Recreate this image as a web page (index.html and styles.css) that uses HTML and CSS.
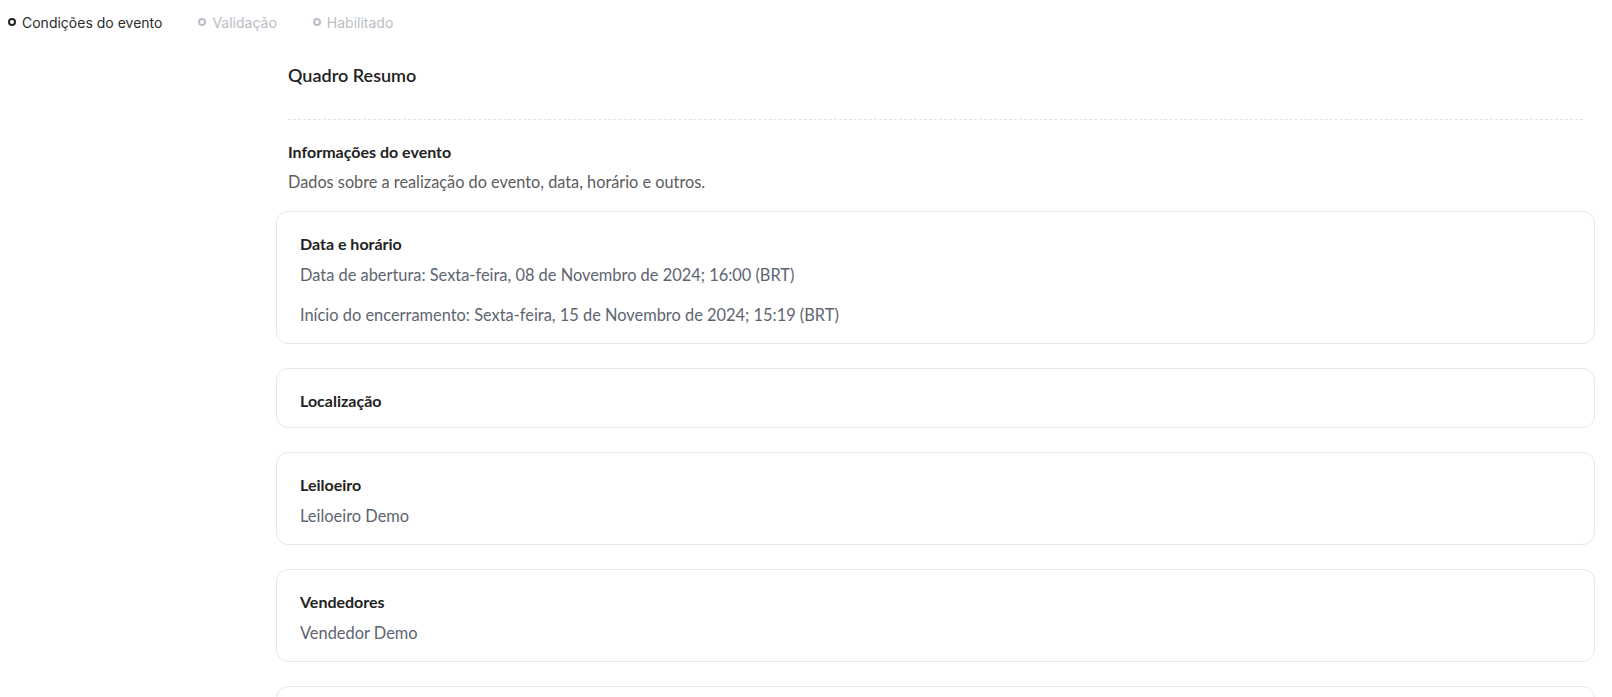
FILE: index.html
```html
<!DOCTYPE html>
<html lang="pt-BR">
<head>
    <meta charset="UTF-8">
    <meta name="viewport" content="width=device-width, initial-scale=1.0">
    <title>Quadro Resumo</title>
    <link rel="stylesheet" href="styles.css">
</head>
<body>
    <div class="steps">
        <div class="step active"><span class="dot"></span>Condições do evento</div>
        <div class="step"><span class="dot"></span>Validação</div>
        <div class="step"><span class="dot"></span>Habilitado</div>
    </div>

    <div class="main">
        <div class="summary-head">
            <h2 class="summary-title">Quadro Resumo</h2>
            <div class="divider"></div>
            <h3 class="section-title">Informações do evento</h3>
            <p class="section-desc">Dados sobre a realização do evento, data, horário e outros.</p>
        </div>

        <div class="card card-dates">
            <h4 class="card-title">Data e horário</h4>
            <p class="card-text">Data de abertura: Sexta-feira, 08 de Novembro de 2024; 16:00 (BRT)</p>
            <p class="card-text">Início do encerramento: Sexta-feira, 15 de Novembro de 2024; 15:19 (BRT)</p>
        </div>
        <div class="card">
            <h4 class="card-title">Localização</h4>
        </div>
        <div class="card">
            <h4 class="card-title">Leiloeiro</h4>
            <p class="card-text">Leiloeiro Demo</p>
        </div>
        <div class="card">
            <h4 class="card-title">Vendedores</h4>
            <p class="card-text">Vendedor Demo</p>
        </div>
        <div class="card card-empty"></div>
    </div>
</body>
</html>
```

FILE: styles.css
```css
*{
    margin: 0;
    padding: 0;
    box-sizing: border-box;
}
body{
    background-color: #fff;
    font-family: Lato, "Noto Sans", sans-serif;
    color: #222;
}
.steps{
    display: flex;
    align-items: center;
    height: 46px;
    padding: 0 0 2px 8px;
    font-family: Inter, "Liberation Sans", sans-serif;
    font-size: 14px;
}
.step{
    display: flex;
    align-items: center;
    gap: 6px;
    margin-right: 36px;
    color: #b9bec6;
}
.step.active{
    color: #2b2b2b;
}
.dot{
    width: 8px;
    height: 8px;
    border-radius: 50%;
    border: 2px solid #b9bec6;
}
.step.active .dot{
    border-color: #222;
}
.main{
    margin: 0 17px 0 276px;
}
.summary-head{
    padding: 0 12px;
}
.summary-title{
    font-size: 18px;
    font-weight: 600;
    line-height: 24px;
    margin-top: 17px;
    color: #222;
}
.divider{
    border-top: 1px dashed #e4e4e4;
    margin: 32px 0 21px;
}
.section-title{
    font-size: 16px;
    font-weight: 700;
    line-height: 22px;
    color: #222;
}
.section-desc{
    font-size: 16.3px;
    line-height: 22px;
    margin-top: 8px;
    color: #5c5c5c;
}
.card{
    border: 1px solid #e8e8e8;
    border-radius: 12px;
    padding: 22px 23px 16px;
    margin-top: 24px;
}
.summary-head + .card{
    margin-top: 18px;
}
.card-title{
    font-size: 16px;
    font-weight: 700;
    line-height: 20px;
    color: #222;
}
.card-text{
    font-size: 16.4px;
    line-height: 24px;
    margin-top: 9px;
    color: #5d6470;
}
.card-dates .card-text + .card-text{
    margin-top: 16px;
}
.card-empty{
    height: 60px;
}
```
